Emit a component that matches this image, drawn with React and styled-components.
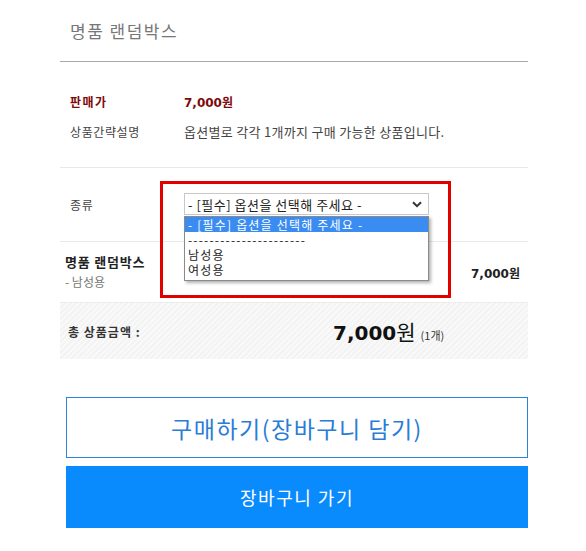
import styled, { createGlobalStyle } from "styled-components";

const GlobalStyle = createGlobalStyle`
  body {
    margin: 0;
    background: #fff;
    font-family: "Noto Sans CJK KR", "Noto Sans", sans-serif;
    color: #333;
  }
`;

const NUM_FONT = `"DejaVu Sans", "Noto Sans CJK KR", sans-serif`;

const Page = styled.div`
  position: relative;
  width: 468px;
  margin-left: 60px;
`;

const Header = styled.div`
  height: 61px;
  display: flex;
  align-items: center;
  padding-left: 10px;
  border-bottom: 1px solid #a8a8a8;
  font-size: 17px;
  letter-spacing: 1.5px;
  color: #777;
`;

const InfoTable = styled.div`
  padding: 24px 0 21px 10px;
  border-bottom: 1px solid #e9e9e9;
`;

const InfoRow = styled.div`
  display: grid;
  grid-template-columns: 114px 1fr;
  align-items: center;
  height: 30px;
`;

const Label = styled.div`
  font-size: 12px;
  font-weight: ${(p) => (p.$strong ? 700 : 400)};
  color: ${(p) => (p.$strong ? "#7d0a0a" : "#444")};
  letter-spacing: ${(p) => (p.$strong ? "1.5px" : "0.6px")};
`;

const Value = styled.div`
  font-size: ${(p) => (p.$price ? "12px" : "13px")};
  font-family: ${(p) => (p.$price ? NUM_FONT : "inherit")};
  font-weight: ${(p) => (p.$price ? 700 : 400)};
  color: ${(p) => (p.$price ? "#7d0a0a" : "#444")};
  letter-spacing: ${(p) => (p.$price ? "0" : "0.3px")};
`;

const OptionRow = styled.div`
  display: grid;
  grid-template-columns: 114px 245px;
  align-items: center;
  padding: 25px 0 26px 10px;
  border-bottom: 1px solid #e9e9e9;
`;

const SelectBox = styled.div`
  height: 22px;
  box-sizing: border-box;
  border: 1px solid #c8c8c8;
  display: flex;
  align-items: center;
  justify-content: space-between;
  padding: 0 6px 0 3px;
  font-size: 13px;
  letter-spacing: 0.5px;
  color: #222;
`;

const Chevron = () => (
  <svg width="10" height="7" viewBox="0 0 10 7">
    <path d="M1 1.2 L5 5.2 L9 1.2" fill="none" stroke="#333" strokeWidth="2" />
  </svg>
);

const ProductRow = styled.div`
  display: flex;
  justify-content: space-between;
  align-items: center;
  height: 60px;
  padding: 0 8px 0 5px;
  border-bottom: 1px solid #ececec;
`;

const ProductName = styled.div`
  font-size: 13px;
  font-weight: 700;
  letter-spacing: 0.8px;
  color: #222;
  line-height: 20px;
`;

const ProductOption = styled.div`
  font-size: 12px;
  color: #777;
  line-height: 20px;
`;

const ProductPrice = styled.div`
  font-family: ${NUM_FONT};
  font-size: 12px;
  font-weight: 700;
  color: #222;
`;

const TotalBox = styled.div`
  display: grid;
  grid-template-columns: 273px 1fr;
  align-items: center;
  height: 56px;
  padding-left: 8px;
  box-sizing: border-box;
  background: repeating-linear-gradient(
    -45deg,
    #f9f9f9 0,
    #f9f9f9 2px,
    #f3f3f3 2px,
    #f3f3f3 4px
  );
`;

const TotalLabel = styled.div`
  font-size: 12px;
  font-weight: 700;
  letter-spacing: 1px;
  color: #333;
`;

const TotalValue = styled.div`
  font-family: ${NUM_FONT};
  font-size: 20px;
  font-weight: 700;
  color: #111;
  display: flex;
  align-items: baseline;
  margin-left: -8px;
`;

const Won = styled.span`
  font-family: "Noto Sans CJK KR", sans-serif;
  font-weight: 400;
  font-size: 21px;
`;

const Count = styled.span`
  font-family: "Noto Sans CJK KR", sans-serif;
  font-size: 11px;
  font-weight: 400;
  color: #333;
  margin-left: 5px;
`;

const Buttons = styled.div`
  display: flex;
  flex-direction: column;
  gap: 8px;
  margin: 38px 0 0 6px;
`;

const Button = styled.div`
  height: ${(p) => (p.$primary ? "62px" : "61px")};
  box-sizing: border-box;
  display: flex;
  align-items: center;
  justify-content: center;
  border: 1px solid ${(p) => (p.$primary ? "#0a8bfd" : "#2e82d8")};
  background: ${(p) => (p.$primary ? "#0a8bfd" : "#fff")};
  color: ${(p) => (p.$primary ? "#fff" : "#2b7cd6")};
  font-size: ${(p) => (p.$primary ? "18px" : "23px")};
  letter-spacing: 1.5px;
`;

const Highlight = styled.div`
  position: absolute;
  left: 100px;
  top: 181px;
  width: 291px;
  height: 117px;
  box-sizing: border-box;
  border: 3px solid #e10000;
  pointer-events: none;
`;

const DropList = styled.div`
  position: absolute;
  left: 124px;
  top: 216px;
  width: 245px;
  box-sizing: border-box;
  border: 1px solid #8a8a8a;
  background: #fff;
  box-shadow: 2px 2px 3px rgba(0, 0, 0, 0.3);
  padding-bottom: 3px;
`;

const DropItem = styled.div`
  height: 15px;
  line-height: 15px;
  padding-left: 3px;
  font-size: 12px;
  letter-spacing: 1.2px;
  white-space: nowrap;
  background: ${(p) => (p.$active ? "#3b8cf1" : "transparent")};
  color: ${(p) => (p.$active ? "#fff" : "#222")};
`;

const options = [
  "- [필수] 옵션을 선택해 주세요 -",
  "----------------------",
  "남성용",
  "여성용",
];

export default function App() {
  return (
    <Page>
      <GlobalStyle />
      <Header>명품 랜덤박스</Header>
      <InfoTable>
        <InfoRow>
          <Label $strong>판매가</Label>
          <Value $price>7,000원</Value>
        </InfoRow>
        <InfoRow>
          <Label>상품간략설명</Label>
          <Value>옵션별로 각각 1개까지 구매 가능한 상품입니다.</Value>
        </InfoRow>
      </InfoTable>
      <OptionRow>
        <Label>종류</Label>
        <SelectBox>
          <span>- [필수] 옵션을 선택해 주세요 -</span>
          <Chevron />
        </SelectBox>
      </OptionRow>
      <ProductRow>
        <div>
          <ProductName>명품 랜덤박스</ProductName>
          <ProductOption>- 남성용</ProductOption>
        </div>
        <ProductPrice>7,000원</ProductPrice>
      </ProductRow>
      <TotalBox>
        <TotalLabel>총 상품금액 :</TotalLabel>
        <TotalValue>
          7,000<Won>원</Won>
          <Count>(1개)</Count>
        </TotalValue>
      </TotalBox>
      <Buttons>
        <Button>구매하기(장바구니 담기)</Button>
        <Button $primary>장바구니 가기</Button>
      </Buttons>
      <DropList>
        {options.map((o, i) => (
          <DropItem key={o} $active={i === 0}>
            {o}
          </DropItem>
        ))}
      </DropList>
      <Highlight />
    </Page>
  );
}
